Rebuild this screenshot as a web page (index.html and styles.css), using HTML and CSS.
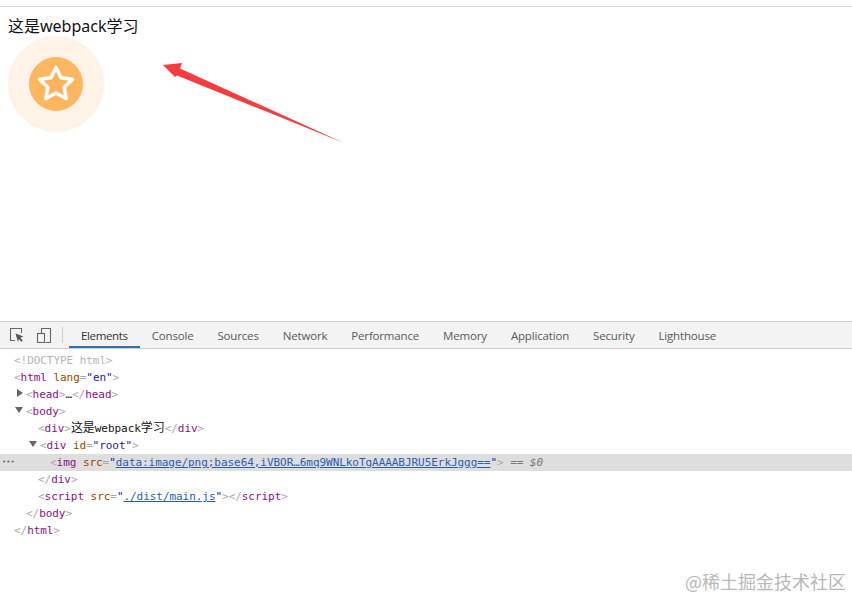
FILE: index.html
```html
<!DOCTYPE html>
<html lang="zh">
<head>
<meta charset="utf-8">
<title>webpack</title>
<link rel="stylesheet" href="styles.css">
</head>
<body>
<main class="page">
  <div class="heading">这是webpack学习</div>
  <svg class="badge" width="96" height="96" viewBox="0 0 96 96">
    <circle cx="48" cy="48" r="48" fill="#fef3e6"/>
    <circle cx="48" cy="48" r="27" fill="#ffb660"/>
    <path d="M48 31.500l5 10.100 11.400 1.800-8.300 7.800 2.100 11.300L48 57l-10.200 5.500 2.100-11.300-8.300-7.800L43 41.600z" fill="#ffb15c" stroke="#fff" stroke-width="3.600" stroke-linejoin="round"/>
  </svg>
</main>
<svg class="arrow" width="200" height="100" viewBox="0 0 200 100">
  <path d="M344 143L177 75.500 175 77 163 65 182 63 180 68.500z" transform="translate(-160 -55)" fill="#f73b3e"/>
</svg>
<section class="devtools">
  <div class="toolbar">
    <div class="tool-icons">
      <svg width="16" height="16" viewBox="0 0 16 16" fill="none">
        <path d="M6 13.500H1.500V1.500h11V6" stroke="#666" stroke-width="1.100"/>
        <path d="M6.500 6.500l8 3-3.300 1.300 2.600 2.700-1.300 1.300-2.600-2.700L9 15z" fill="#555"/>
      </svg>
      <svg width="16" height="16" viewBox="0 0 16 16" fill="none">
        <path d="M5.500 6.500V1.500h9v14h-5" stroke="#666" stroke-width="1.100"/>
        <rect x="1.500" y="6.500" width="7" height="9" stroke="#666" stroke-width="1.100"/>
      </svg>
      <span class="divider"></span>
    </div>
    <nav class="tabs">
      <span class="tab active">Elements</span>
      <span class="tab">Console</span>
      <span class="tab">Sources</span>
      <span class="tab">Network</span>
      <span class="tab">Performance</span>
      <span class="tab">Memory</span>
      <span class="tab">Application</span>
      <span class="tab">Security</span>
      <span class="tab">Lighthouse</span>
    </nav>
  </div>
  <div class="tree">
    <div class="row in0 dim">&lt;!DOCTYPE html&gt;</div>
    <div class="row in0"><b>&lt;</b><i>html</i> <u>lang</u><b>=</b><s>"en"</s><b>&gt;</b></div>
    <div class="row in1"><span class="tri closed"></span><b>&lt;</b><i>head</i><b>&gt;</b>…<b>&lt;/</b><i>head</i><b>&gt;</b></div>
    <div class="row in1"><span class="tri open"></span><b>&lt;</b><i>body</i><b>&gt;</b></div>
    <div class="row in2"><b>&lt;</b><i>div</i><b>&gt;</b><span class="txt"><span class="cjk">这是</span>webpack<span class="cjk">学习</span></span><b>&lt;/</b><i>div</i><b>&gt;</b></div>
    <div class="row in2b"><span class="tri open"></span><b>&lt;</b><i>div</i> <u>id</u><b>=</b><s>"root"</s><b>&gt;</b></div>
    <div class="row in3 selected"><span class="dots">•••</span><b>&lt;</b><i>img</i> <u>src</u><b>=</b><s>"</s><a>data:image/png;base64,iVBOR…6mq9WNLkoTgAAAABJRU5ErkJggg==</a><s>"</s><b>&gt;</b> <em>== <q>$0</q></em></div>
    <div class="row in2"><b>&lt;/</b><i>div</i><b>&gt;</b></div>
    <div class="row in2"><b>&lt;</b><i>script</i> <u>src</u><b>=</b><s>"</s><a>./dist/main.js</a><s>"</s><b>&gt;&lt;/</b><i>script</i><b>&gt;</b></div>
    <div class="row in1"><b>&lt;/</b><i>body</i><b>&gt;</b></div>
    <div class="row in0"><b>&lt;/</b><i>html</i><b>&gt;</b></div>
  </div>
</section>
<div class="watermark">@稀土掘金技术社区</div>
</body>
</html>
```
FILE: styles.css
```css
html, body {
  margin: 0;
  height: 597px;
  overflow: hidden;
  background: #fff;
}
body {
  position: relative;
  display: flex;
  flex-direction: column;
}
.page {
  height: 315px;
  margin-top: 6px;
  border-top: 1px solid #dcdcdc;
  padding-left: 8px;
  box-sizing: border-box;
  flex: none;
}
.heading {
  font: 16px/22px "Noto Sans", "Noto Sans CJK SC", sans-serif;
  color: #111;
  padding-top: 8px;
}
.badge {
  display: block;
  margin-top: -1px;
}
.arrow {
  position: absolute;
  left: 160px;
  top: 55px;
}
.devtools {
  flex: 1;
}
.toolbar {
  height: 26px;
  display: flex;
  background: #f3f3f3;
  border-top: 1px solid #cdcdcd;
  border-bottom: 1px solid #cdcdcd;
}
.tool-icons {
  width: 69px;
  flex: none;
  display: flex;
  align-items: center;
  gap: 11px;
  padding-left: 9px;
  box-sizing: border-box;
}
.divider {
  width: 1px;
  height: 16px;
  background: #ccc;
  margin-left: -1px;
}
.tabs {
  display: flex;
  font: 11.500px/28px "Open Sans", sans-serif;
  color: #5a5a5a;
}
.tab {
  padding: 0 12px;
  height: 26px;
  box-sizing: border-box;
  letter-spacing: -0.17px;
}
.tab.active {
  color: #333;
  border-bottom: 2px solid #2a74b8;
  letter-spacing: -0.35px;
}
.tree {
  padding-top: 3px;
  font: 11px/17px "DejaVu Sans Mono", "Noto Sans CJK SC", monospace;
  letter-spacing: -0.05px;
  color: #222;
}
.row {
  height: 17px;
  white-space: nowrap;
  position: relative;
}
.in0 { padding-left: 14px; }
.in1 { padding-left: 26px; }
.in2 { padding-left: 38px; }
.in2b { padding-left: 40px; }
.in3 { padding-left: 50px; }
.dim { color: #b5b5b5; }
.row b { font-weight: normal; color: #a8a8a8; }
.row i { font-style: normal; color: #881280; }
.row u { text-decoration: none; color: #994500; }
.row s { text-decoration: none; color: #1a1aa6; }
.row a { color: #2a5db0; text-decoration: underline; }
.row em { color: #777; font-style: normal; }
.row q { quotes: none; font-style: italic; }
.txt { color: #111; }
.cjk { font-size: 12px; }
.selected { background: #dedede; }
.dots {
  position: absolute;
  left: 2px;
  top: 0;
  font-size: 7px;
  letter-spacing: 0;
  color: #666;
}
.tri {
  position: absolute;
  width: 0;
  height: 0;
  border-style: solid;
  border-color: transparent;
}
.closed {
  margin-left: -9px;
  margin-top: 3px;
  border-width: 4px 0 4px 6px;
  border-left-color: #666;
}
.open {
  margin-left: -11px;
  margin-top: 4px;
  border-width: 6px 4px 0 4px;
  border-top-color: #666;
}
.watermark {
  position: absolute;
  right: 6px;
  bottom: 5px;
  font: 18px/22px "Noto Sans CJK SC", sans-serif;
  color: #b8b8b8;
}
```
